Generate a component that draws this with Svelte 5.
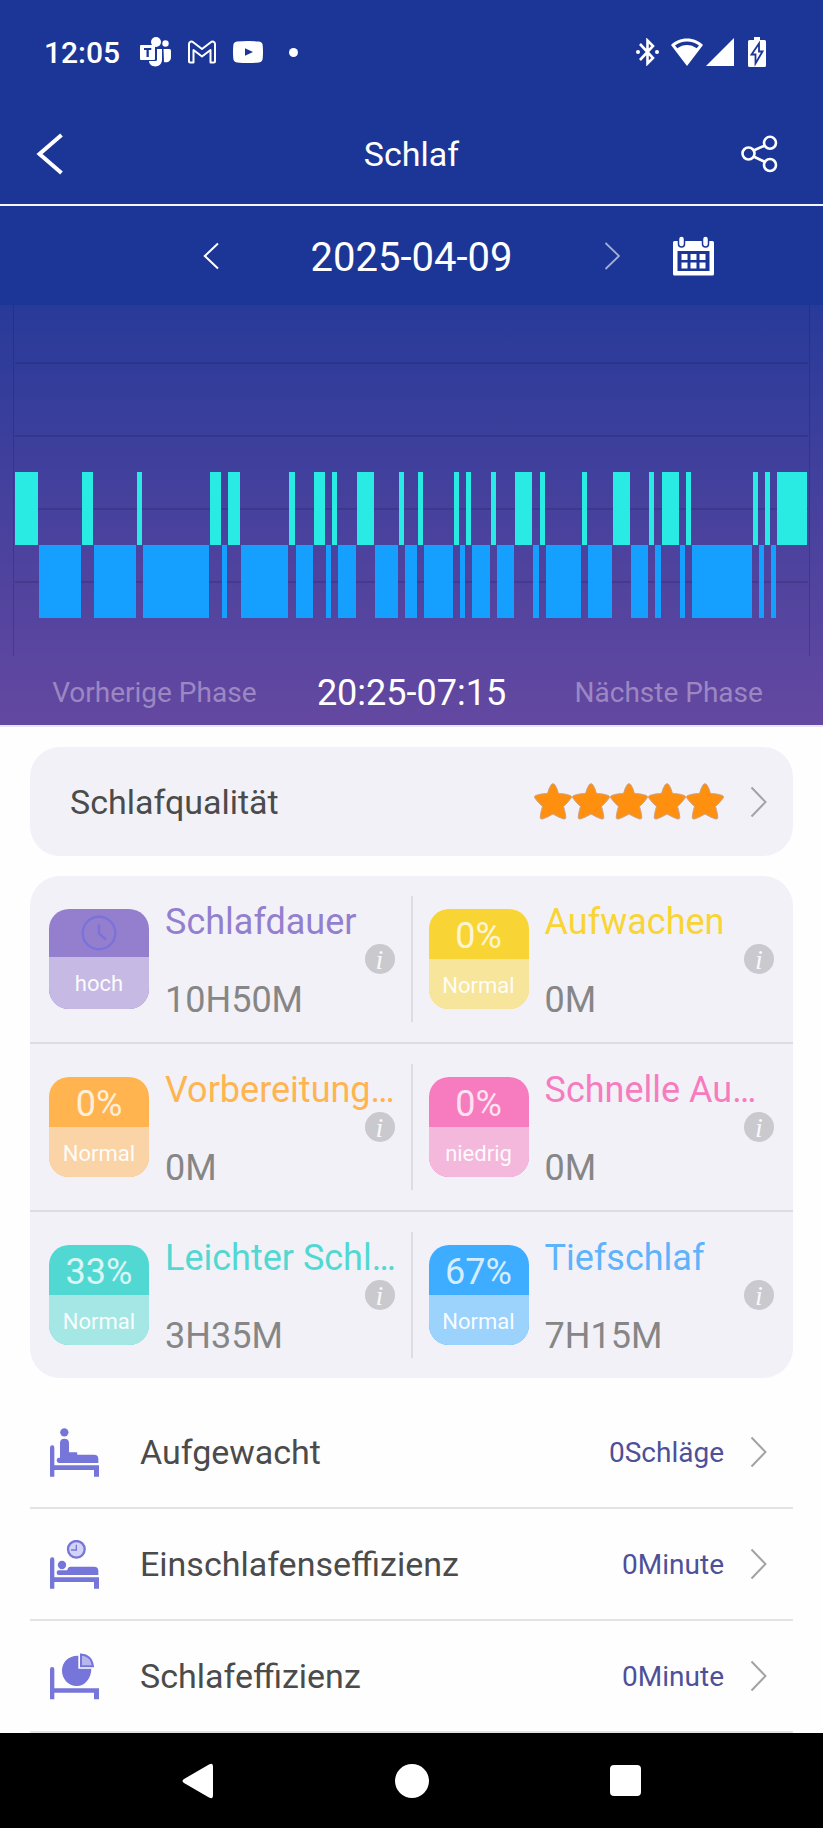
<script lang="ts">
	type Stage = "light" | "deep"

	let date = $state("2025-04-09")
	let period = $state("20:25-07:15")

	// phase lengths in steps of five minutes, light and deep sleep take turns
	const steps = [
		4, 7, 2, 7, 1, 11, 2, 1, 2, 8, 1, 3, 2, 1, 1, 3, 3, 4, 1, 2, 1, 5, 1, 1,
		1, 3, 1, 3, 3, 1, 1, 6, 1, 4, 3, 3, 1, 1, 3, 1, 1, 10, 1, 1, 1, 1, 5
	]
	let total = 0
	const phases = steps.map((length, i) => {
		const start = total + 1
		total += length
		return { start, length, stage: (i % 2 ? "deep" : "light") as Stage }
	})

	const rows = [
		[
			{ id: "purple", title: "Schlafdauer", value: "10H50M", percent: "", level: "hoch" },
			{ id: "yellow", title: "Aufwachen", value: "0M", percent: "0%", level: "Normal" }
		],
		[
			{ id: "orange", title: "Vorbereitung…", value: "0M", percent: "0%", level: "Normal" },
			{ id: "pink", title: "Schnelle Au…", value: "0M", percent: "0%", level: "niedrig" }
		],
		[
			{ id: "teal", title: "Leichter Schl…", value: "3H35M", percent: "33%", level: "Normal" },
			{ id: "blue", title: "Tiefschlaf", value: "7H15M", percent: "67%", level: "Normal" }
		]
	]

	const entries = [
		{ icon: "awake", label: "Aufgewacht", value: "0Schläge" },
		{ icon: "clock", label: "Einschlafenseffizienz", value: "0Minute" },
		{ icon: "pie", label: "Schlafeffizienz", value: "0Minute" }
	]
</script>

{#snippet chevron()}
	<svg class="chevron" width="17" height="32" viewBox="0 0 17 32" aria-hidden="true">
		<path d="M1.500 1.500L15.500 16L1.500 30.500" fill="none" stroke="currentColor" stroke-width="2" />
	</svg>
{/snippet}

{#snippet tile(cell)}
	<div class="tile {cell.id}">
		<div class="upper">
			{#if cell.percent}
				{cell.percent}
			{:else}
				<svg width="36" height="36" viewBox="0 0 36 36" fill="none" stroke="#7a72da" stroke-width="2.400" aria-hidden="true">
					<circle cx="18" cy="18" r="16.300" />
					<path d="M18 9.500V18.500L25 24.500" />
				</svg>
			{/if}
		</div>
		<div class="lower">{cell.level}</div>
	</div>
{/snippet}

{#snippet cellBox(cell)}
	<div class="cell">
		{@render tile(cell)}
		<div class="details">
			<p class="title {cell.id}">{cell.title}</p>
			<button class="info" aria-label="Info {cell.title}">i</button>
			<p class="value">{cell.value}</p>
		</div>
	</div>
{/snippet}

<div class="page">
	<div class="status">
		<span class="time">12:05</span>
		<svg width="31" height="30" viewBox="0 0 31 30" aria-hidden="true">
			<g fill="#fff">
				<circle cx="16" cy="5" r="5" />
				<circle cx="25.500" cy="6.500" r="3.200" />
				<path d="M17 12H22V22.500C22 32 9 31 9 24H15.500Q17 24 17 22.500Z" />
				<path d="M23.500 12H29.500Q31 12 31 13.500V20C31 24 28 26 24 25Z" />
				<path fill-rule="evenodd" d="M1 8H14Q15 8 15 9V22Q15 23 14 23H1Q0 23 0 22V9Q0 8 1 8ZM4 11V13H6.500V20H8.800V13H11.300V11Z" />
			</g>
		</svg>
		<svg width="30" height="24" viewBox="0 0 30 24" fill="none" stroke="#fff" stroke-width="2" stroke-linejoin="round" aria-hidden="true">
			<path d="M2 4C2 1.500 4.500 .8 6.500 2.500L15 9L23.500 2.500C25.500 .8 28 1.500 28 4V21.500Q28 22.500 27 22.500H23.500V10L15 16.500L6.500 10V22.500H3Q2 22.500 2 21.500Z" />
		</svg>
		<svg width="30" height="22" viewBox="0 0 30 22" aria-hidden="true">
			<path fill="#fff" fill-rule="evenodd" d="M4 .6Q15 -.4 26 .6Q29.500 1 29.700 4.500Q30.300 11 29.700 17.500Q29.500 21 26 21.400Q15 22.400 4 21.400Q.5 21 .3 17.500Q-.3 11 .3 4.500Q.5 1 4 .6ZM12 7.200V14.800L20 11Z" />
		</svg>
		<span class="dot"></span>
		<span class="fill"></span>
		<svg class="bluetooth" width="23" height="28" viewBox="0 0 23 28" fill="none" stroke="#fff" stroke-width="2.600" aria-hidden="true">
			<path d="M4 6L17 20L11.500 25.500V2.500L17 8L4 22" />
			<circle cx="2" cy="14" r="2" fill="#fff" stroke="none" />
			<circle cx="21" cy="14" r="2" fill="#fff" stroke="none" />
		</svg>
		<svg width="32" height="28" viewBox="0 0 32 28" aria-hidden="true">
			<path fill="#fff" fill-rule="evenodd" d="M16 .5C22.500 .5 28 3 32 7L16 28L0 7C4 3 9.500 .5 16 .5ZM4 7.500L6.300 10.300C12 5.800 20 5.800 25.700 10.300L28 7.500C21 2 11 2 4 7.500Z" />
		</svg>
		<svg class="signal" width="28" height="28" viewBox="0 0 28 28" aria-hidden="true">
			<path fill="#fff" d="M28 0V28H0Z" />
		</svg>
		<svg width="18" height="30" viewBox="0 0 18 30" aria-hidden="true">
			<path fill="#fff" d="M6 0H12V3H16.500Q18 3 18 4.500V28.500Q18 30 16.500 30H1.500Q0 30 0 28.500V4.500Q0 3 1.500 3H6Z" />
			<path fill="#fff" stroke="#1b3697" stroke-width="1.800" d="M11 6.500L3.500 17.500H7.500V26.500L14.500 14.500H11Z" />
		</svg>
	</div>

	<header>
		<button class="back" aria-label="Zurück">
			<svg width="28" height="42" viewBox="0 0 28 42" aria-hidden="true">
				<path d="M25.500 2L3.500 21L25.500 40" fill="none" stroke="#fff" stroke-width="4" />
			</svg>
		</button>
		<h1>Schlaf</h1>
		<button class="share" aria-label="Teilen">
			<svg width="37" height="38" viewBox="0 0 37 38" fill="none" stroke="#fff" stroke-width="2.600" aria-hidden="true">
				<circle cx="7.500" cy="18.500" r="6" />
				<circle cx="29" cy="7.800" r="6" />
				<circle cx="29" cy="30" r="6" />
				<path d="M12.500 15.500L24 10.500M12.500 21.500L24 27" />
			</svg>
		</button>
	</header>

	<div class="date-bar">
		<div class="picker">
			<button aria-label="Vorheriger Tag">
				<svg width="16" height="28" viewBox="0 0 16 28" aria-hidden="true">
					<path d="M15 1.500L1.800 14L15 26.500" fill="none" stroke="#fff" stroke-width="2" />
				</svg>
			</button>
			<span class="date">{date}</span>
			<button class="faded" aria-label="Nächster Tag">
				<svg width="16" height="28" viewBox="0 0 16 28" aria-hidden="true">
					<path d="M1.500 1L15 14L1.500 27" fill="none" stroke="#fff" stroke-width="1.800" />
				</svg>
			</button>
		</div>
		<button class="calendar" aria-label="Kalender">
			<svg width="41" height="40" viewBox="0 0 41 40" aria-hidden="true">
				<path fill="#fff" fill-rule="evenodd" d="M1.500 5H39.500Q41 5 41 6.500V38Q41 39.500 39.500 39.500H1.500Q0 39.500 0 38V6.500Q0 5 1.500 5ZM4.500 15V35H36.500V15Z" />
				<g fill="#fff" stroke="#1b3697" stroke-width="1.500">
					<rect x="5.500" y="0" width="6" height="11" rx="3" />
					<rect x="29.500" y="0" width="6" height="11" rx="3" />
				</g>
				<path fill="#fff" d="M8.500 18H14.500V24H8.500ZM17.500 18H23.500V24H17.500ZM26.500 18H32.500V24H26.500ZM8.500 26.500H14.500V32.500H8.500ZM17.500 26.500H23.500V32.500H17.500ZM26.500 26.500H32.500V32.500H26.500Z" />
			</svg>
		</button>
	</div>

	<section class="chart">
		<div class="plot">
			<div class="bars" style="grid-template-columns: repeat({total}, 1fr)">
				{#each phases as phase}
					<div class="bar {phase.stage}" style="grid-column: {phase.start} / span {phase.length}"></div>
				{/each}
			</div>
		</div>
		<div class="phases">
			<button>Vorherige Phase</button>
			<span class="period">{period}</span>
			<button>Nächste Phase</button>
		</div>
	</section>

	<main>
		<button class="quality">
			<span class="label">Schlafqualität</span>
			<span class="stars">
				{#each Array(5) as _}
					<svg width="38" height="37" viewBox="0 0 38 37" aria-hidden="true">
						<path d="M17.300 1.500Q19 -.2 20.700 1.500Q23 5 24.500 10.500Q31 10.500 36.500 12.500Q38.300 13.500 36.800 15.500Q33.500 20 29.500 23.500Q31.500 29.500 31.800 34.500Q31.500 36.500 29.500 36Q24 34 19 31Q14 34 8.500 36Q6.500 36.500 6.200 34.500Q6.500 29.500 8.500 23.500Q4.500 20 1.200 15.500Q-.3 13.500 1.500 12.500Q7 10.500 13.500 10.500Q15 5 17.300 1.500Z" fill="#ff8f0f" stroke="#cfa283" stroke-width="1" />
					</svg>
				{/each}
			</span>
			{@render chevron()}
		</button>

		<section class="stats">
			{#each rows as row}
				<div class="row">
					{@render cellBox(row[0])}
					<div class="divider"></div>
					{@render cellBox(row[1])}
				</div>
			{/each}
		</section>

		<div class="list">
			{#each entries as entry}
				<button class="entry">
					<svg width="49" height="49" viewBox="0 0 147 147" fill="#7575da" aria-hidden="true">
						{#if entry.icon === "pie"}
							<path d="M0 52Q0 45 6.500 45Q13 45 13 52V109H147V142H132V122H13V142H0Z" />
							<path d="M85 11V50H124C124 77 106 102 80 102C55 102 36 80 36 56C36 30 56 10 85 11Z" />
							<path d="M93 7.500C113 9 126 22 129 43H93Z" fill="#b7b7ee" stroke="#7575da" stroke-width="6" />
						{:else}
							<path d="M0 59Q0 52 6.500 52Q13 52 13 59V112H147V146H132V126H13V146H0Z" />
							{#if entry.icon === "awake"}
								<circle cx="43" cy="13" r="12.500" />
								<path d="M30 89V45Q30 32 43 32Q57 32 57 45V73H80Q82 73 82 80H132Q145 80 145 92V105H26Q20 105 20 97Q20 89 26 89Z" />
							{:else}
								<circle cx="36" cy="75" r="12.500" />
								<path d="M26 91H52Q53 80 62 80H132Q145 80 145 92V105H26Q20 105 20 98Q20 91 26 91Z" />
								<circle cx="79" cy="28" r="25" fill="#d3d3f6" stroke="#7575da" stroke-width="7" />
								<path d="M79 14V30H63" fill="none" stroke="#7575da" stroke-width="4" />
							{/if}
						{/if}
					</svg>
					<span class="label">{entry.label}</span>
					<span class="amount">{entry.value}</span>
					{@render chevron()}
				</button>
			{/each}
		</div>
	</main>

	<nav>
		<button aria-label="Zurück">
			<svg width="32" height="36" viewBox="0 0 32 36" aria-hidden="true">
				<path fill="#fff" d="M27 1.500Q31 -1 31 4V32Q31 37 27 34.500L2 20Q-1 18 2 16Z" />
			</svg>
		</button>
		<button aria-label="Startseite">
			<svg width="34" height="34" viewBox="0 0 34 34" aria-hidden="true"><circle cx="17" cy="17" r="17" fill="#fff" /></svg>
		</button>
		<button aria-label="Übersicht">
			<svg width="31" height="31" viewBox="0 0 31 31" aria-hidden="true"><rect width="31" height="31" rx="4" fill="#fff" /></svg>
		</button>
	</nav>
</div>

<style>
	:global(body) {
		margin: 0;
		background: #fefefe;
	}

	.page {
		font-family: Roboto, "Liberation Sans", sans-serif;
		color: #4b4b4b;
	}
	.page * {
		box-sizing: border-box;
	}
	svg {
		display: block;
		flex-shrink: 0;
	}
	button {
		margin: 0;
		padding: 0;
		border: none;
		background: none;
		font: inherit;
		color: inherit;
		text-align: left;
		cursor: pointer;
	}
	p, h1 {
		margin: 0;
		font-weight: 400;
	}
	.fill {
		flex-grow: 1;
	}

	/* top of the screen */
	.status {
		display: flex;
		align-items: center;
		gap: 16px;
		height: 104px;
		padding: 0 57px 0 44px;
		background: #1b3697;
		color: white;
	}
	.time {
		width: 80px;
		font-size: 30px;
		font-weight: 500;
	}
	.dot {
		width: 9px;
		height: 9px;
		margin-left: 10px;
		border-radius: 50%;
		background: white;
	}
	.bluetooth {
		margin-right: -4px;
	}
	.signal {
		margin: 0 -2px 0 -13px;
	}
	header {
		display: flex;
		align-items: center;
		justify-content: space-between;
		height: 102px;
		padding: 0 45px 0 36px;
		border-bottom: 2px solid #f4f7ff;
		background: #1b3697;
		color: white;
	}
	.back {
		width: 53px;
	}
	.share {
		width: 44px;
	}
	.share svg {
		margin-left: auto;
	}
	h1 {
		font-size: 34px;
		line-height: 40px;
	}
	.date-bar {
		display: grid;
		grid-template-columns: 1fr 418px 1fr;
		align-items: center;
		height: 99px;
		background: #1b3697;
		color: white;
	}
	.picker {
		grid-column: 2;
		display: flex;
		align-items: center;
		justify-content: space-between;
	}
	.date {
		padding-top: 4px;
		font-size: 40px;
		line-height: 48px;
	}
	.faded {
		opacity: 0.6;
	}
	.calendar {
		padding-left: 52px;
	}

	/* sleep phases */
	.chart {
		border-bottom: 2px solid #e9e4f1;
		background: linear-gradient(#283a99, #41409c 40%, #6448a1);
	}
	.plot {
		margin: 0 13px;
		padding: 21px 1px 38px;
		border: solid rgba(20, 20, 80, 0.25);
		border-width: 0 1px;
	}
	.bars {
		display: grid;
		grid-template-rows: repeat(4, 73px);
		background: linear-gradient(transparent 36px, rgba(20, 20, 80, 0.2) 36px 38px, transparent 38px) 0 0 / 100% 73px;
	}
	.bar {
		padding-right: 1px;
		background-clip: content-box;
	}
	.bar.light {
		grid-row: 3;
		background-color: #2aebe3;
	}
	.bar.deep {
		grid-row: 4;
		background-color: #159fff;
	}
	.phases {
		display: grid;
		grid-template-columns: 3fr 2fr 3fr;
		align-items: center;
		height: 69px;
		padding-top: 4px;
	}
	.phases button {
		font-size: 28px;
		color: #9d87c2;
		text-align: center;
	}
	.period {
		font-size: 36px;
		color: white;
		text-align: center;
		white-space: nowrap;
	}

	main {
		padding: 20px 30px 0;
	}
	.chevron {
		color: #a3a3a7;
	}
	.label {
		flex-grow: 1;
		font-size: 34px;
	}
	.quality {
		display: flex;
		align-items: center;
		width: 100%;
		height: 109px;
		padding: 0 26px 0 40px;
		border-radius: 30px;
		background: #f2f1f8;
	}
	.stars {
		display: flex;
		margin-right: 26px;
	}

	.stats {
		margin: 20px 0 19px;
		border-radius: 30px;
		background: #f2f1f8;
	}
	.row {
		display: grid;
		grid-template-columns: minmax(0, 1fr) 2px minmax(0, 1fr);
		padding: 0 3px;
	}
	.row + .row {
		border-top: 2px solid #dddce3;
	}
	.divider {
		margin: 20px 0;
		background: #dddce3;
	}
	.cell {
		display: flex;
		align-items: flex-start;
		gap: 16px;
		padding: 26px 16px 22px;
	}
	.tile {
		display: flex;
		flex-direction: column;
		flex-shrink: 0;
		width: 100px;
		height: 100px;
		margin-top: 7px;
		border-radius: 20px;
		overflow: hidden;
		background: var(--main);
		text-align: center;
	}
	.upper {
		display: flex;
		align-items: center;
		justify-content: center;
		height: 50px;
		padding-top: 3px;
		font-size: 36px;
		line-height: 40px;
		color: rgba(255, 255, 255, 0.8);
	}
	.lower {
		flex-grow: 1;
		padding-top: 13px;
		background: var(--soft);
		font-size: 22px;
		line-height: 28px;
		color: rgba(255, 255, 255, 0.95);
	}
	.tile.purple .upper {
		height: 48px;
		padding: 0;
	}
	.purple { --main: #947fcf; --soft: #c6bae4; }
	.yellow { --main: #f9d435; --soft: #f6e59b; }
	.orange { --main: #ffb450; --soft: #fad4a6; }
	.pink { --main: #f77cbf; --soft: #f4b8dc; }
	.teal { --main: #52d8d2; --soft: #a4e7e4; }
	.blue { --main: #3eadff; --soft: #9bd3fd; }

	.details {
		display: flex;
		flex-direction: column;
		flex-grow: 1;
		min-width: 0;
		font-size: 36px;
		line-height: 40px;
		white-space: nowrap;
	}
	.title {
		color: var(--main);
	}
	.title.blue {
		color: #5eb3fb;
	}
	.value {
		color: #868686;
	}
	.info {
		align-self: flex-end;
		width: 30px;
		height: 30px;
		margin: 2px 0 6px;
		border-radius: 50%;
		background: #c9c9ce;
		font: italic 28px/29px "Liberation Serif", serif;
		color: #f8f8fc;
		text-align: center;
	}

	.entry {
		display: flex;
		align-items: center;
		width: 100%;
		height: 112px;
		padding: 0 26px 0 20px;
		border-bottom: 2px solid #e3e3e3;
	}
	.entry .label {
		margin-left: 41px;
	}
	.amount {
		margin-right: 26px;
		font-size: 28px;
		color: #4e5099;
	}

	nav {
		display: flex;
		justify-content: center;
		height: 95px;
		background: black;
	}
	nav button {
		display: flex;
		align-items: center;
		justify-content: center;
		width: 26%;
	}
</style>
